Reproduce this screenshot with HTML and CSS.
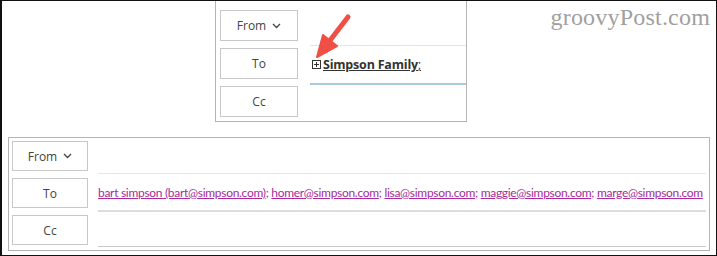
FILE: index.html
```html
<!DOCTYPE html>
<html>
<head>
<meta charset="utf-8">
<link rel="stylesheet" href="styles.css">
</head>
<body>
<div class="frame">
  <div class="watermark">groovyPost.com</div>
  <div class="panel-top">
    <div class="btns btns-top">
      <div class="btn">From <span class="chev"><svg width="9" height="6" viewBox="0 0 9 6"><path d="M1 1 L4.5 4.5 L8 1" fill="none" stroke="#444" stroke-width="1.3"/></svg></span></div>
      <div class="btn">To</div>
      <div class="btn">Cc</div>
    </div>
    <div class="fields-top">
      <div class="spacer-top"></div>
      <div class="to-field">
        <span class="plusbox"><svg width="9" height="9" viewBox="0 0 9 9"><rect x="0.5" y="0.5" width="8" height="8" fill="none" stroke="#333" stroke-width="1"/><path d="M2 4.5 H7 M4.5 2 V7" stroke="#333" stroke-width="1"/></svg></span><span class="group">Simpson Family</span><span class="semi">;</span>
      </div>
    </div>
    <svg class="arrow" width="50" height="60" viewBox="0 0 50 60">
      <path d="M36 8 L16 34" stroke="#ef4f45" stroke-width="5" stroke-linecap="round" fill="none"/>
      <path d="M5 48 L11 26 L25 37 Z" fill="#ef4f45" stroke="#ef4f45" stroke-width="2" stroke-linejoin="round"/>
    </svg>
  </div>
  <div class="panel-bottom">
    <div class="btns btns-bottom">
      <div class="btn">From <span class="chev"><svg width="9" height="6" viewBox="0 0 9 6"><path d="M1 1 L4.5 4.5 L8 1" fill="none" stroke="#444" stroke-width="1.3"/></svg></span></div>
      <div class="btn">To</div>
      <div class="btn">Cc</div>
    </div>
    <div class="fields-bottom">
      <div class="spacer-bottom"></div>
      <div class="to-row"><a>bart simpson (bart@simpson.com)</a>; <a>homer@simpson.com</a>; <a>lisa@simpson.com</a>; <a>maggie@simpson.com</a>; <a>marge@simpson.com</a></div>
      <div class="cc-row"></div>
    </div>
  </div>
</div>
</body>
</html>
```
FILE: styles.css
```css
html, body {
  margin: 0;
  padding: 0;
  background: #fff;
}
.frame {
  position: relative;
  width: 717px;
  height: 256px;
  box-sizing: border-box;
  border: 1px solid #111;
  border-left-width: 2px;
  background: #fff;
  font-family: "Open Sans", "Noto Sans", sans-serif;
  color: #333;
}
.watermark {
  position: absolute;
  top: 3px;
  right: 6px;
  font-family: "Liberation Serif", serif;
  font-size: 24px;
  color: #a0a0a0;
  letter-spacing: 0.2px;
}
.panel-top {
  position: relative;
  margin-left: 213px;
  width: 252px;
  height: 121px;
  box-sizing: border-box;
  border: 1px solid #b4b4b4;
  border-top: none;
  display: flex;
}
.btns {
  display: flex;
  flex-direction: column;
  gap: 7px;
}
.btns-top {
  padding: 9px 0 0 4px;
}
.btn {
  box-sizing: border-box;
  width: 78px;
  height: 31px;
  border: 1px solid #c8c8c8;
  display: flex;
  align-items: center;
  justify-content: center;
  font-size: 12px;
  color: #444;
  background: #fff;
}
.chev {
  display: inline-flex;
  margin-left: 6px;
}
.fields-top {
  margin-left: 12px;
  flex: 1;
  display: flex;
  flex-direction: column;
}
.spacer-top {
  height: 44px;
}
.to-field {
  height: 37px;
  border-top: 1px solid #e4e4e4;
  border-bottom: 2px solid #a8cbe0;
  display: flex;
  align-items: center;
  padding-left: 2px;
}
.plusbox {
  display: inline-flex;
  margin-right: 2px;
}
.group {
  font-weight: 700;
  font-size: 12.5px;
  color: #333;
  text-decoration: underline;
  letter-spacing: -0.2px;
}
.semi {
  font-size: 12px;
  color: #333;
  text-decoration: underline;
}
.arrow {
  position: absolute;
  left: 96px;
  top: 8px;
}
.panel-bottom {
  margin-left: 6px;
  margin-top: 15px;
  width: 702px;
  height: 114px;
  box-sizing: border-box;
  border: 1px solid #b4b4b4;
  display: flex;
  padding: 3px 3px 0 3px;
}
.btns-bottom .btn {
  width: 76px;
  height: 30px;
}
.fields-bottom {
  margin-left: 10px;
  flex: 1;
  min-width: 0;
  display: flex;
  flex-direction: column;
}
.spacer-bottom {
  height: 32px;
}
.to-row {
  height: 36px;
  border-top: 1px solid #e6e6e6;
  border-bottom: 2px solid #dcdcdc;
  display: flex;
  align-items: center;
  white-space: pre;
  font-family: "Lato", "Open Sans", sans-serif;
  font-size: 12px;
  letter-spacing: -0.3px;
  color: #a82a9c;
}
.to-row a {
  color: #a82a9c;
  text-decoration: underline;
}
.cc-row {
  height: 34px;
  border-bottom: 1px solid #c8c8c8;
}
```
